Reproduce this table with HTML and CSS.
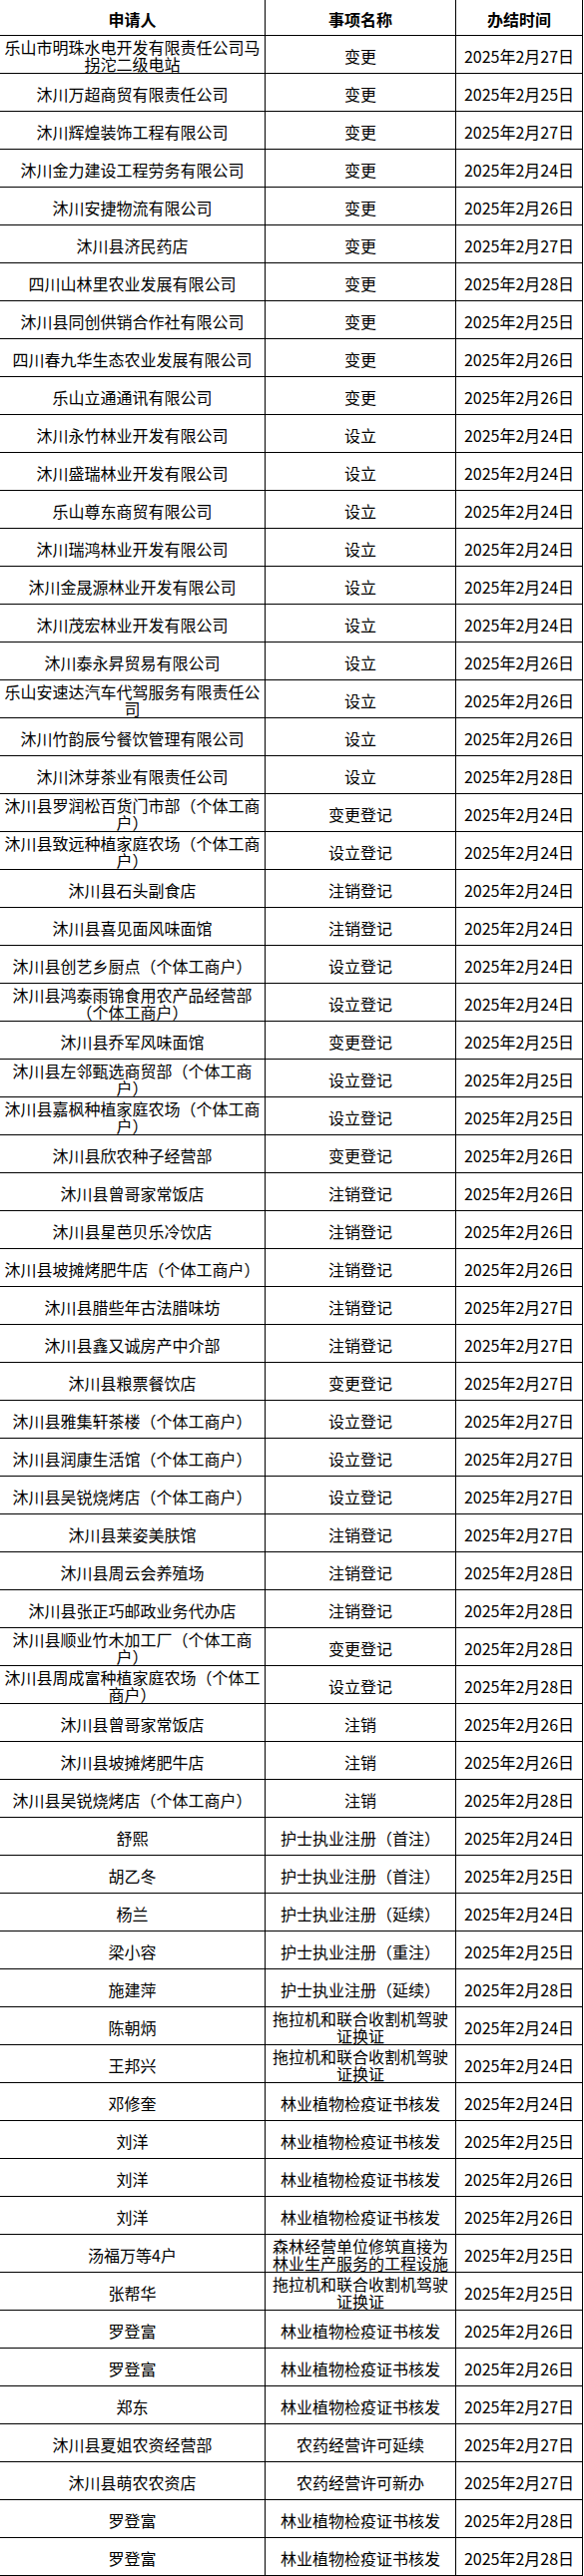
FILE: index.html
```html
<!DOCTYPE html>
<html lang="zh-CN">
<head>
<meta charset="utf-8">
<title>办结信息</title>
<link rel="stylesheet" href="styles.css">
</head>
<body>
<table class="list">
<colgroup><col class="c-name"><col class="c-item"><col class="c-date"></colgroup>
<thead>
<tr class="head"><th>申请人</th><th>事项名称</th><th>办结时间</th></tr>
</thead>
<tbody>
<tr><td>乐山市明珠水电开发有限责任公司马拐沱二级电站</td><td>变更</td><td>2025年2月27日</td></tr>
<tr><td>沐川万超商贸有限责任公司</td><td>变更</td><td>2025年2月25日</td></tr>
<tr><td>沐川辉煌装饰工程有限公司</td><td>变更</td><td>2025年2月27日</td></tr>
<tr><td>沐川金力建设工程劳务有限公司</td><td>变更</td><td>2025年2月24日</td></tr>
<tr><td>沐川安捷物流有限公司</td><td>变更</td><td>2025年2月26日</td></tr>
<tr><td>沐川县济民药店</td><td>变更</td><td>2025年2月27日</td></tr>
<tr><td>四川山林里农业发展有限公司</td><td>变更</td><td>2025年2月28日</td></tr>
<tr><td>沐川县同创供销合作社有限公司</td><td>变更</td><td>2025年2月25日</td></tr>
<tr><td>四川春九华生态农业发展有限公司</td><td>变更</td><td>2025年2月26日</td></tr>
<tr><td>乐山立通通讯有限公司</td><td>变更</td><td>2025年2月26日</td></tr>
<tr><td>沐川永竹林业开发有限公司</td><td>设立</td><td>2025年2月24日</td></tr>
<tr><td>沐川盛瑞林业开发有限公司</td><td>设立</td><td>2025年2月24日</td></tr>
<tr><td>乐山尊东商贸有限公司</td><td>设立</td><td>2025年2月24日</td></tr>
<tr><td>沐川瑞鸿林业开发有限公司</td><td>设立</td><td>2025年2月24日</td></tr>
<tr><td>沐川金晟源林业开发有限公司</td><td>设立</td><td>2025年2月24日</td></tr>
<tr><td>沐川茂宏林业开发有限公司</td><td>设立</td><td>2025年2月24日</td></tr>
<tr><td>沐川泰永昇贸易有限公司</td><td>设立</td><td>2025年2月26日</td></tr>
<tr><td>乐山安速达汽车代驾服务有限责任公司</td><td>设立</td><td>2025年2月26日</td></tr>
<tr><td>沐川竹韵辰兮餐饮管理有限公司</td><td>设立</td><td>2025年2月26日</td></tr>
<tr><td>沐川沐芽茶业有限责任公司</td><td>设立</td><td>2025年2月28日</td></tr>
<tr><td>沐川县罗润松百货门市部（个体工商户）</td><td>变更登记</td><td>2025年2月24日</td></tr>
<tr><td>沐川县致远种植家庭农场（个体工商户）</td><td>设立登记</td><td>2025年2月24日</td></tr>
<tr><td>沐川县石头副食店</td><td>注销登记</td><td>2025年2月24日</td></tr>
<tr><td>沐川县喜见面风味面馆</td><td>注销登记</td><td>2025年2月24日</td></tr>
<tr><td>沐川县创艺乡厨点（个体工商户）</td><td>设立登记</td><td>2025年2月24日</td></tr>
<tr><td>沐川县鸿泰雨锦食用农产品经营部（个体工商户）</td><td>设立登记</td><td>2025年2月24日</td></tr>
<tr><td>沐川县乔军风味面馆</td><td>变更登记</td><td>2025年2月25日</td></tr>
<tr><td>沐川县左邻甄选商贸部（个体工商户）</td><td>设立登记</td><td>2025年2月25日</td></tr>
<tr><td>沐川县嘉枫种植家庭农场（个体工商户）</td><td>设立登记</td><td>2025年2月25日</td></tr>
<tr><td>沐川县欣农种子经营部</td><td>变更登记</td><td>2025年2月26日</td></tr>
<tr><td>沐川县曾哥家常饭店</td><td>注销登记</td><td>2025年2月26日</td></tr>
<tr><td>沐川县星芭贝乐冷饮店</td><td>注销登记</td><td>2025年2月26日</td></tr>
<tr><td>沐川县坡摊烤肥牛店（个体工商户）</td><td>注销登记</td><td>2025年2月26日</td></tr>
<tr><td>沐川县腊些年古法腊味坊</td><td>注销登记</td><td>2025年2月27日</td></tr>
<tr><td>沐川县鑫又诚房产中介部</td><td>注销登记</td><td>2025年2月27日</td></tr>
<tr><td>沐川县粮票餐饮店</td><td>变更登记</td><td>2025年2月27日</td></tr>
<tr><td>沐川县雅集轩茶楼（个体工商户）</td><td>设立登记</td><td>2025年2月27日</td></tr>
<tr><td>沐川县润康生活馆（个体工商户）</td><td>设立登记</td><td>2025年2月27日</td></tr>
<tr><td>沐川县吴锐烧烤店（个体工商户）</td><td>设立登记</td><td>2025年2月27日</td></tr>
<tr><td>沐川县莱姿美肤馆</td><td>注销登记</td><td>2025年2月27日</td></tr>
<tr><td>沐川县周云会养殖场</td><td>注销登记</td><td>2025年2月28日</td></tr>
<tr><td>沐川县张正巧邮政业务代办店</td><td>注销登记</td><td>2025年2月28日</td></tr>
<tr><td>沐川县顺业竹木加工厂（个体工商户）</td><td>变更登记</td><td>2025年2月28日</td></tr>
<tr><td>沐川县周成富种植家庭农场（个体工商户）</td><td>设立登记</td><td>2025年2月28日</td></tr>
<tr><td>沐川县曾哥家常饭店</td><td>注销</td><td>2025年2月26日</td></tr>
<tr><td>沐川县坡摊烤肥牛店</td><td>注销</td><td>2025年2月26日</td></tr>
<tr><td>沐川县吴锐烧烤店（个体工商户）</td><td>注销</td><td>2025年2月28日</td></tr>
<tr><td>舒熙</td><td>护士执业注册（首注）</td><td>2025年2月24日</td></tr>
<tr><td>胡乙冬</td><td>护士执业注册（首注）</td><td>2025年2月25日</td></tr>
<tr><td>杨兰</td><td>护士执业注册（延续）</td><td>2025年2月24日</td></tr>
<tr><td>梁小容</td><td>护士执业注册（重注）</td><td>2025年2月25日</td></tr>
<tr><td>施建萍</td><td>护士执业注册（延续）</td><td>2025年2月28日</td></tr>
<tr><td>陈朝炳</td><td>拖拉机和联合收割机驾驶证换证</td><td>2025年2月24日</td></tr>
<tr><td>王邦兴</td><td>拖拉机和联合收割机驾驶证换证</td><td>2025年2月24日</td></tr>
<tr><td>邓修奎</td><td>林业植物检疫证书核发</td><td>2025年2月24日</td></tr>
<tr><td>刘洋</td><td>林业植物检疫证书核发</td><td>2025年2月25日</td></tr>
<tr><td>刘洋</td><td>林业植物检疫证书核发</td><td>2025年2月26日</td></tr>
<tr><td>刘洋</td><td>林业植物检疫证书核发</td><td>2025年2月26日</td></tr>
<tr><td>汤福万等4户</td><td>森林经营单位修筑直接为林业生产服务的工程设施</td><td>2025年2月25日</td></tr>
<tr><td>张帮华</td><td>拖拉机和联合收割机驾驶证换证</td><td>2025年2月25日</td></tr>
<tr><td>罗登富</td><td>林业植物检疫证书核发</td><td>2025年2月26日</td></tr>
<tr><td>罗登富</td><td>林业植物检疫证书核发</td><td>2025年2月26日</td></tr>
<tr><td>郑东</td><td>林业植物检疫证书核发</td><td>2025年2月27日</td></tr>
<tr><td>沐川县夏姐农资经营部</td><td>农药经营许可延续</td><td>2025年2月27日</td></tr>
<tr><td>沐川县萌农农资店</td><td>农药经营许可新办</td><td>2025年2月27日</td></tr>
<tr><td>罗登富</td><td>林业植物检疫证书核发</td><td>2025年2月28日</td></tr>
<tr><td>罗登富</td><td>林业植物检疫证书核发</td><td>2025年2月28日</td></tr>
</tbody>
</table>
</body>
</html>
```

FILE: styles.css
```css
html, body {
  margin: 0;
  padding: 0;
  background: #fff;
}

body {
  font-family: "Noto Sans CJK SC", "Noto Sans", sans-serif;
  color: #000;
  font-size: 16px;
}

.list {
  border-collapse: separate;
  border-spacing: 0;
  table-layout: fixed;
  width: 584px;
}

.c-name { width: 266px; }
.c-item { width: 191px; }
.c-date { width: 127px; }

.list th,
.list td {
  border-right: 1px solid #000;
  border-bottom: 1px solid #000;
  padding: 3px 1px 0;
  text-align: center;
  vertical-align: middle;
  line-height: 17px;
  font-size: 16px;
  overflow: visible;
}

.list .head {
  height: 36px;
}

.list th {
  font-weight: bold;
}

.list tbody tr {
  height: 38px;
}
```
